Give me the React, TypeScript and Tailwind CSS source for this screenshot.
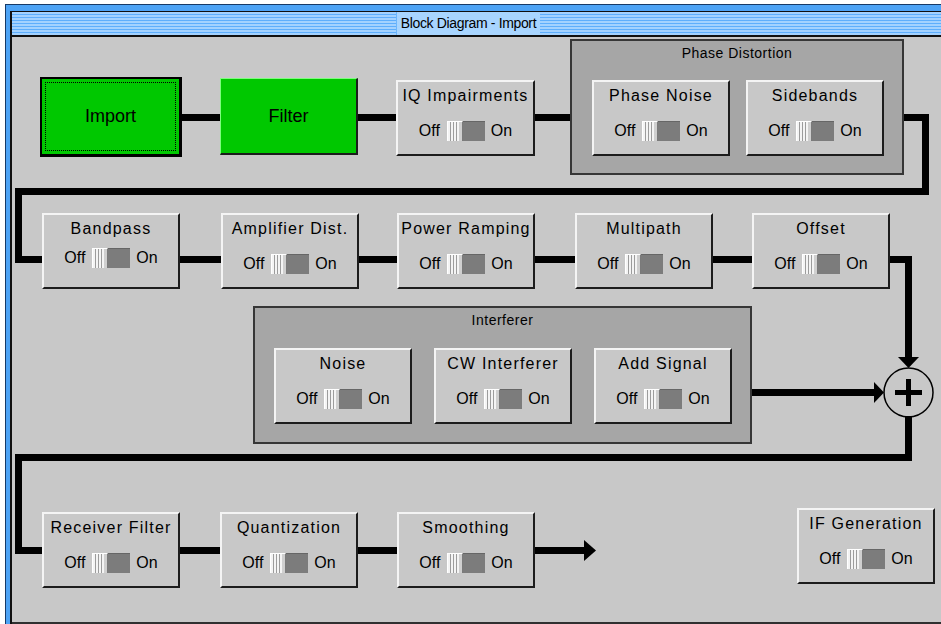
import React from 'react';

const Switch = () => (
  <div className="flex items-center h-[20px] text-[16px] leading-[20px] text-black">
    <span>Off</span>
    <div className="ml-[7px] mr-[6px] flex w-[38px] h-[20px]">
      <div className="w-[16px] h-full flex border-l border-t border-l-white border-t-white border-r border-r-[#7a7a7a] bg-[#cfcfcf]">
        <div className="w-[11px] h-full bg-[image:repeating-linear-gradient(90deg,#f4f4f4_0px,#f4f4f4_2px,#9c9c9c_2px,#9c9c9c_3px)]" />
      </div>
      <div className="flex-1 bg-[#7c7c7c] border-t border-[#666666]" />
    </div>
    <span>On</span>
  </div>
);

type BlockProps = { title: string; className?: string; rowClass?: string };

const Block = ({ title, className = '', rowClass = 'mt-[15px]' }: BlockProps) => (
  <div
    className={`w-[138px] h-[76px] bg-[#c8c8c8] border-2 border-t-[#f4f4f4] border-l-[#f4f4f4] border-r-[#1c1c1c] border-b-[#1c1c1c] flex flex-col items-center ${className}`}
  >
    <div className="pt-[4px] leading-[20px] text-[16px] tracking-[1.2px] whitespace-nowrap text-black">
      {title}
    </div>
    <div className={rowClass}>
      <Switch />
    </div>
  </div>
);

const Wires = () => (
  <svg className="absolute left-0 top-0" width={929} height={585} viewBox="12 37 929 585">
    <g fill="none" stroke="#000" strokeWidth={7} strokeLinejoin="miter">
      <path d="M175 117.5 H925.5 V191.5 H18.5 V259.5 H908.5 V359" />
      <path d="M752 392.5 H876" />
      <path d="M908.5 416 V457.5 H18.5 V550.5 H586" />
    </g>
    <polygon points="898,357 919,357 908.5,368" fill="#000" />
    <polygon points="874,382 874,403 884,392.5" fill="#000" />
    <polygon points="584,540 584,561 596,550.5" fill="#000" />
    <circle cx="908.5" cy="392.5" r="24.5" fill="none" stroke="#000" strokeWidth={1.5} />
    <path d="M895 392.5 H922 M908.5 379 V406" stroke="#000" strokeWidth={5} />
  </svg>
);

export default function App() {
  return (
    <div className="w-[941px] h-[624px] overflow-hidden bg-white pt-[4px] pl-[5px] font-[family-name:'Liberation_Sans',Arial,sans-serif]">
      <div className="w-[1000px] h-[620px] border-l border-t border-[#173a66] bg-[#4da3f5] pt-[6px] pl-[4px]">
        <div className="h-full border-l-2 border-t border-[#101010] flex flex-col">
          {/* title bar */}
          <div className="h-[23px] flex pl-[384px] bg-[image:repeating-linear-gradient(180deg,#a3d2ff_0px,#a3d2ff_2px,#5eaefc_2px,#5eaefc_3px)]">
            <div className="h-full w-[144px] flex items-center justify-center bg-[#a8d5ff] border-l border-[#6cb6fc] text-[14px] tracking-[-0.35px] text-black">
              Block Diagram - Import
            </div>
          </div>
          <div className="h-[2px] bg-[#101010]" />

          {/* canvas */}
          <div className="relative h-[585px] bg-[#c8c8c8]">
            <Wires />

            <div className="absolute left-[28px] top-[40px] w-[142px] h-[80px] bg-[#00c800] border-2 border-black border-r-[3px] border-b-[3px] p-[3px]">
              <div className="h-full border border-dotted border-black flex items-center justify-center text-[18px] text-black">
                Import
              </div>
            </div>
            <div className="absolute left-[208px] top-[41px] w-[138px] h-[77px] bg-[#00c800] border border-t-[#7dff7d] border-l-[#7dff7d] border-r-2 border-b-2 border-r-[#1c1c1c] border-b-[#1c1c1c] flex items-center justify-center text-[18px] text-black">
              Filter
            </div>
            <Block title="IQ Impairments" className="absolute left-[384px] top-[43px] w-[139px]" />

            <div className="absolute left-[558px] top-[2px] w-[334px] h-[136px] bg-[#a6a6a6] border-2 border-[#363636] flex flex-col">
              <div className="h-[24px] text-center text-[14px] leading-[24px] tracking-[0.5px] text-black">
                Phase Distortion
              </div>
              <div className="flex gap-[16px] pl-[20px] mt-[15px]">
                <Block title="Phase Noise" />
                <Block title="Sidebands" />
              </div>
            </div>

            <Block title="Bandpass" rowClass="mt-[9px]" className="absolute left-[30px] top-[176px]" />
            <Block title="Amplifier Dist." className="absolute left-[209px] top-[176px]" />
            <Block title="Power Ramping" className="absolute left-[385px] top-[176px]" />
            <Block title="Multipath" className="absolute left-[563px] top-[176px]" />
            <Block title="Offset" className="absolute left-[740px] top-[176px]" />

            <div className="absolute left-[241px] top-[269px] w-[499px] h-[138px] bg-[#a6a6a6] border-2 border-[#363636] flex flex-col">
              <div className="h-[24px] text-center text-[14px] leading-[24px] tracking-[0.5px] text-black">
                Interferer
              </div>
              <div className="flex gap-[22px] pl-[19px] mt-[16px]">
                <Block title="Noise" />
                <Block title="CW Interferer" />
                <Block title="Add Signal" />
              </div>
            </div>

            <Block title="Receiver Filter" className="absolute left-[30px] top-[475px]" />
            <Block title="Quantization" className="absolute left-[208px] top-[475px]" />
            <Block title="Smoothing" className="absolute left-[385px] top-[475px]" />
            <Block title="IF Generation" className="absolute left-[785px] top-[471px]" />
          </div>
          <div className="h-[2px] bg-[#303030]" />
        </div>
      </div>
    </div>
  );
}
